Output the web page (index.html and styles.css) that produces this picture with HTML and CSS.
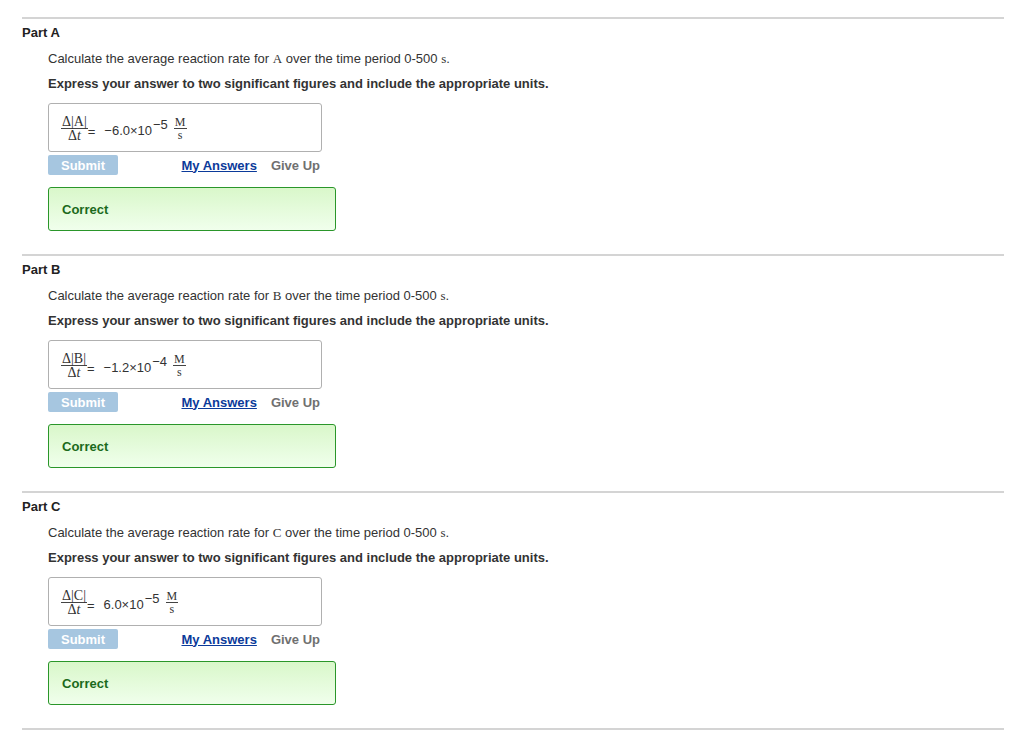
FILE: index.html
```html
<!DOCTYPE html>
<html>
<head>
<meta charset="utf-8">
<link rel="stylesheet" href="styles.css">
</head>
<body>
<div class="page">
  <section class="part">
    <h2 class="part-title">Part A</h2>
    <div class="part-body">
      <p class="prompt">Calculate the average reaction rate for <span class="math">A</span> over the time period 0-500 <span class="math">s</span>.</p>
      <p class="instr">Express your answer to two significant figures and include the appropriate units.</p>
      <div class="answer">
        <span class="frac"><span class="num">Δ|A|</span><span class="den">Δ<i>t</i></span></span><span class="eq">=</span>
        <span class="val">−6.0×10<sup>−5</sup></span>
        <span class="frac unit"><span class="num">M</span><span class="den">s</span></span>
      </div>
      <div class="actions">
        <button class="submit">Submit</button>
        <div class="links"><a class="my" href="#">My Answers</a><span class="giveup">Give Up</span></div>
      </div>
      <div class="correct">Correct</div>
    </div>
  </section>
  <section class="part">
    <h2 class="part-title">Part B</h2>
    <div class="part-body">
      <p class="prompt">Calculate the average reaction rate for <span class="math">B</span> over the time period 0-500 <span class="math">s</span>.</p>
      <p class="instr">Express your answer to two significant figures and include the appropriate units.</p>
      <div class="answer">
        <span class="frac"><span class="num">Δ|B|</span><span class="den">Δ<i>t</i></span></span><span class="eq">=</span>
        <span class="val">−1.2×10<sup>−4</sup></span>
        <span class="frac unit"><span class="num">M</span><span class="den">s</span></span>
      </div>
      <div class="actions">
        <button class="submit">Submit</button>
        <div class="links"><a class="my" href="#">My Answers</a><span class="giveup">Give Up</span></div>
      </div>
      <div class="correct">Correct</div>
    </div>
  </section>
  <section class="part">
    <h2 class="part-title">Part C</h2>
    <div class="part-body">
      <p class="prompt">Calculate the average reaction rate for <span class="math">C</span> over the time period 0-500 <span class="math">s</span>.</p>
      <p class="instr">Express your answer to two significant figures and include the appropriate units.</p>
      <div class="answer">
        <span class="frac"><span class="num">Δ|C|</span><span class="den">Δ<i>t</i></span></span><span class="eq">=</span>
        <span class="val">6.0×10<sup>−5</sup></span>
        <span class="frac unit"><span class="num">M</span><span class="den">s</span></span>
      </div>
      <div class="actions">
        <button class="submit">Submit</button>
        <div class="links"><a class="my" href="#">My Answers</a><span class="giveup">Give Up</span></div>
      </div>
      <div class="correct">Correct</div>
    </div>
  </section>
  <div class="end-rule"></div>
</div>
</body>
</html>
```

FILE: styles.css
```css
html, body {
  margin: 0;
  padding: 0;
  background: #fff;
}
body {
  font-family: "Liberation Sans", Arial, Helvetica, sans-serif;
  font-size: 13px;
  color: #333;
}
.page {
  padding: 17px 20px 0 22px;
}
.part {
  border-top: 2px solid #d4d4d4;
  height: 235px;
}
.end-rule {
  border-top: 2px solid #d4d4d4;
}
.part-title {
  margin: 6px 0 0 0;
  font-size: 13px;
  line-height: 16px;
  font-weight: bold;
  color: #222;
}
.part-body {
  padding-left: 26px;
}
.prompt {
  margin: 10px 0 0 0;
  line-height: 16px;
  color: #333;
}
.math {
  font-family: "Liberation Serif", "Times New Roman", serif;
  font-size: 13px;
}
.instr {
  margin: 9px 0 0 0;
  line-height: 16px;
  font-weight: bold;
  color: #333;
}
.answer {
  margin-top: 11px;
  width: 272px;
  height: 47px;
  border: 1px solid #b0b0b0;
  border-radius: 3px;
  box-sizing: content-box;
  display: flex;
  align-items: center;
}
.frac {
  display: inline-flex;
  flex-direction: column;
  align-items: center;
  font-family: "Liberation Serif", "Times New Roman", serif;
  font-size: 14px;
  line-height: 11px;
  margin-left: 12px;
  margin-top: 1px;
}
.frac .num {
  border-bottom: 1px solid #444;
  padding: 0 1px 1px 1px;
}
.frac .den {
  padding-top: 1px;
}
.eq {
  font-size: 13px;
  margin-left: 0;
  margin-top: 8px;
}
.val {
  font-size: 13px;
  margin-left: 9px;
  margin-top: 6px;
  color: #333;
}
.val sup {
  font-size: 13px;
  vertical-align: 6px;
  line-height: 0;
  margin-left: 1px;
}
.frac.unit {
  margin-left: 6px;
  font-size: 12px;
  line-height: 10px;
}
.actions {
  margin-top: 3px;
  width: 272px;
  height: 20px;
  display: flex;
  justify-content: space-between;
  align-items: center;
}
.submit {
  width: 70px;
  height: 20px;
  border: none;
  border-radius: 2px;
  background: #a6c6e0;
  color: #fff;
  font-family: "Liberation Sans", Arial, sans-serif;
  font-weight: bold;
  font-size: 13px;
  padding: 0;
}
.links {
  display: flex;
  gap: 14px;
  font-weight: bold;
  font-size: 13px;
}
.my {
  color: #0b3a9a;
  text-decoration: underline;
}
.giveup {
  color: #707070;
}
.correct {
  margin-top: 12px;
  width: 273px;
  height: 42px;
  border: 1px solid #2a962a;
  border-radius: 3px;
  background: linear-gradient(#d9f7ca, #f0ffec);
  color: #1b6a1b;
  font-weight: bold;
  font-size: 13px;
  display: flex;
  align-items: center;
  padding-left: 13px;
  box-sizing: content-box;
}
```
